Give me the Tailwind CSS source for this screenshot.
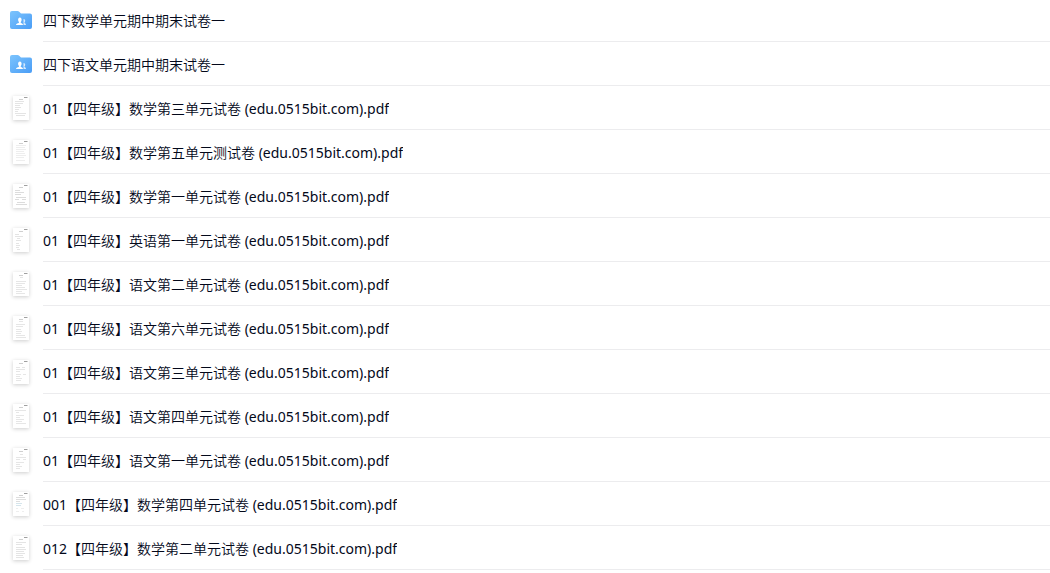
<!DOCTYPE html>
<html lang="zh-CN">
<head>
    <meta charset="UTF-8">
    <meta name="viewport" content="width=device-width, initial-scale=1.0">
    <title>四年级试卷</title>
    <script src="https://cdn.jsdelivr.net/npm/@tailwindcss/browser@4"></script>
</head>
<body class="bg-white font-['Noto_Sans','Noto_Sans_CJK_SC_DemiLight','Noto_Sans_CJK_SC',sans-serif] text-sm text-[#03081a]">
    <!-- 共用图标 -->
    <svg class="absolute size-0">
        <defs>
            <linearGradient id="folderFill" x1="0" y1="0" x2="1" y2="1">
                <stop offset="0" stop-color="#7cc4fd"/>
                <stop offset="1" stop-color="#4a9df6"/>
            </linearGradient>
        </defs>
        <symbol id="folder" viewBox="0 0 22 18">
            <path fill="url(#folderFill)" d="M0 2a2 2 0 0 1 2-2h5.500q1 0 1.700.7L11 2.500h9a2 2 0 0 1 2 2V16a2 2 0 0 1-2 2H2a2 2 0 0 1-2-2z"/>
            <path fill="#fff" fill-opacity=".75" d="M13.500 8c1.200 0 1.700.8 1.700 1.800 0 .8-.3 1.300-.7 1.700v.6c.9.3 1.500.8 1.500 1.900h-2.500z"/>
            <path fill="#fff" d="M9.900 6.500c1.200 0 1.700 1 1.700 2.300 0 1-.3 1.800-.8 2.300v.9c1.400.4 2.200.8 2.200 2H6c0-1.200 1.200-1.600 2.900-2v-.9c-.5-.5-.8-1.300-.8-2.300 0-1.300.6-2.300 1.800-2.300z"/>
        </symbol>
        <symbol id="paper" viewBox="0 0 16 24">
            <path stroke="#a0a0a0" d="M11 1.500h3"/>
            <path stroke="#d0d0d0" d="M14 1.500h1M6 3.500h4"/>
        </symbol>
    </svg>

    <!-- 文件列表 -->
    <ul class="-mt-0.5">
        <li class="flex h-11 items-center gap-[11px] pl-2.5">
            <svg class="h-[18px] w-[22px] shrink-0"><use href="#folder"/></svg>
            <a href="#" class="flex h-full min-w-0 flex-1 items-center border-b border-[#ececee] pt-0.5"><span class="truncate">四下数学单元期中期末试卷一</span></a>
        </li>
        <li class="flex h-11 items-center gap-[11px] pl-2.5">
            <svg class="h-[18px] w-[22px] shrink-0"><use href="#folder"/></svg>
            <a href="#" class="flex h-full min-w-0 flex-1 items-center border-b border-[#ececee] pt-0.5"><span class="truncate">四下语文单元期中期末试卷一</span></a>
        </li>
        <li class="flex h-11 items-center gap-[11px] pl-2.5">
            <svg class="mx-[3px] h-6 w-4 shrink-0 bg-white shadow-[0_1px_4px_rgba(0,0,0,0.2)]" viewBox="0 0 16 24" fill="none"><use href="#paper"/><path stroke="#e4e4e4" d="M2 5.500h9M2 7.500h8M2 9.500h5M2 11.500h6M2 13.500h4M2 15.500h3M2 17.500h11M3 19.500h9"/></svg>
            <a href="#" class="flex h-full min-w-0 flex-1 items-center border-b border-[#ececee] pt-0.5"><span class="truncate">01【四年级】数学第三单元试卷 (edu.0515bit.com).pdf</span></a>
        </li>
        <li class="flex h-11 items-center gap-[11px] pl-2.5">
            <svg class="mx-[3px] h-6 w-4 shrink-0 bg-white shadow-[0_1px_4px_rgba(0,0,0,0.2)]" viewBox="0 0 16 24" fill="none"><use href="#paper"/><path stroke="#eeeeee" d="M3 5.500h10M3 7.500h9M3 9.500h10M3 11.500h8M3 13.500h9M3 15.500h10M3 17.500h8M3 20.500h9"/></svg>
            <a href="#" class="flex h-full min-w-0 flex-1 items-center border-b border-[#ececee] pt-0.5"><span class="truncate">01【四年级】数学第五单元测试卷 (edu.0515bit.com).pdf</span></a>
        </li>
        <li class="flex h-11 items-center gap-[11px] pl-2.5">
            <svg class="mx-[3px] h-6 w-4 shrink-0 bg-white shadow-[0_1px_4px_rgba(0,0,0,0.2)]" viewBox="0 0 16 24" fill="none"><use href="#paper"/><path stroke="#dcdcdc" d="M2 6.500h5M2 8.500h9M2 10.500h6M3 13.500h10M2 15.500h4M9 15.500h4M4 18.500h8M3 20.500h11"/></svg>
            <a href="#" class="flex h-full min-w-0 flex-1 items-center border-b border-[#ececee] pt-0.5"><span class="truncate">01【四年级】数学第一单元试卷 (edu.0515bit.com).pdf</span></a>
        </li>
        <li class="flex h-11 items-center gap-[11px] pl-2.5">
            <svg class="mx-[3px] h-6 w-4 shrink-0 bg-white shadow-[0_1px_4px_rgba(0,0,0,0.2)]" viewBox="0 0 16 24" fill="none"><use href="#paper"/><path stroke="#e4e4e4" d="M2 6.500h4M2 8.500h8M4 10.500h3M3 12.500h5M3 15.500h3M3 17.500h4M3 19.500h3M4 21.500h3"/></svg>
            <a href="#" class="flex h-full min-w-0 flex-1 items-center border-b border-[#ececee] pt-0.5"><span class="truncate">01【四年级】英语第一单元试卷 (edu.0515bit.com).pdf</span></a>
        </li>
        <li class="flex h-11 items-center gap-[11px] pl-2.5">
            <svg class="mx-[3px] h-6 w-4 shrink-0 bg-white shadow-[0_1px_4px_rgba(0,0,0,0.2)]" viewBox="0 0 16 24" fill="none"><use href="#paper"/><path stroke="#e6e6e6" d="M7 5.500h3M3 9.500h10M3 11.500h9M3 13.500h6M3 15.500h9M3 17.500h11M3 19.500h6M3 21.500h9"/></svg>
            <a href="#" class="flex h-full min-w-0 flex-1 items-center border-b border-[#ececee] pt-0.5"><span class="truncate">01【四年级】语文第二单元试卷 (edu.0515bit.com).pdf</span></a>
        </li>
        <li class="flex h-11 items-center gap-[11px] pl-2.5">
            <svg class="mx-[3px] h-6 w-4 shrink-0 bg-white shadow-[0_1px_4px_rgba(0,0,0,0.2)]" viewBox="0 0 16 24" fill="none"><use href="#paper"/><path stroke="#e6e6e6" d="M6 5.500h4M3 8.500h9M3 10.500h7M3 13.500h5M3 15.500h6M3 17.500h5M3 19.500h9M3 21.500h10"/></svg>
            <a href="#" class="flex h-full min-w-0 flex-1 items-center border-b border-[#ececee] pt-0.5"><span class="truncate">01【四年级】语文第六单元试卷 (edu.0515bit.com).pdf</span></a>
        </li>
        <li class="flex h-11 items-center gap-[11px] pl-2.5">
            <svg class="mx-[3px] h-6 w-4 shrink-0 bg-white shadow-[0_1px_4px_rgba(0,0,0,0.2)]" viewBox="0 0 16 24" fill="none"><use href="#paper"/><path stroke="#e6e6e6" d="M3 7.500h4M9 7.500h3M3 9.500h9M3 11.500h4M3 14.500h5M10 14.500h3M3 16.500h4M3 18.500h6M3 20.500h5"/></svg>
            <a href="#" class="flex h-full min-w-0 flex-1 items-center border-b border-[#ececee] pt-0.5"><span class="truncate">01【四年级】语文第三单元试卷 (edu.0515bit.com).pdf</span></a>
        </li>
        <li class="flex h-11 items-center gap-[11px] pl-2.5">
            <svg class="mx-[3px] h-6 w-4 shrink-0 bg-white shadow-[0_1px_4px_rgba(0,0,0,0.2)]" viewBox="0 0 16 24" fill="none"><use href="#paper"/><path stroke="#e6e6e6" d="M2 6.500h11M3 8.500h3M3 11.500h8M3 13.500h4M3 15.500h8M3 17.500h6M3 19.500h10"/></svg>
            <a href="#" class="flex h-full min-w-0 flex-1 items-center border-b border-[#ececee] pt-0.5"><span class="truncate">01【四年级】语文第四单元试卷 (edu.0515bit.com).pdf</span></a>
        </li>
        <li class="flex h-11 items-center gap-[11px] pl-2.5">
            <svg class="mx-[3px] h-6 w-4 shrink-0 bg-white shadow-[0_1px_4px_rgba(0,0,0,0.2)]" viewBox="0 0 16 24" fill="none"><use href="#paper"/><path stroke="#e6e6e6" d="M7 6.500h3M3 9.500h10M3 11.500h4M10 11.500h3M3 14.500h8M3 16.500h4M3 18.500h6M3 20.500h4"/></svg>
            <a href="#" class="flex h-full min-w-0 flex-1 items-center border-b border-[#ececee] pt-0.5"><span class="truncate">01【四年级】语文第一单元试卷 (edu.0515bit.com).pdf</span></a>
        </li>
        <li class="flex h-11 items-center gap-[11px] pl-2.5">
            <svg class="mx-[3px] h-6 w-4 shrink-0 bg-white shadow-[0_1px_4px_rgba(0,0,0,0.2)]" viewBox="0 0 16 24" fill="none"><use href="#paper"/><path stroke="#dedede" d="M3 5.500h9M3 7.500h10M3 9.500h4"/><path stroke="#d5e5ec" d="M3 11.500h6M3 13.500h5"/><path stroke="#eeeeee" d="M3 16.500h2M8 16.500h3M3 19.500h3M9 19.500h2"/></svg>
            <a href="#" class="flex h-full min-w-0 flex-1 items-center border-b border-[#ececee] pt-0.5"><span class="truncate">001【四年级】数学第四单元试卷 (edu.0515bit.com).pdf</span></a>
        </li>
        <li class="flex h-11 items-center gap-[11px] pl-2.5">
            <svg class="mx-[3px] h-6 w-4 shrink-0 bg-white shadow-[0_1px_4px_rgba(0,0,0,0.2)]" viewBox="0 0 16 24" fill="none"><use href="#paper"/><path stroke="#e4e4e4" d="M3 6.500h10M3 8.500h6M3 11.500h9M3 13.500h10M3 15.500h8M3 17.500h9M3 19.500h7M3 21.500h8"/></svg>
            <a href="#" class="flex h-full min-w-0 flex-1 items-center border-b border-[#ececee] pt-0.5"><span class="truncate">012【四年级】数学第二单元试卷 (edu.0515bit.com).pdf</span></a>
        </li>
    </ul>
</body>
</html>
